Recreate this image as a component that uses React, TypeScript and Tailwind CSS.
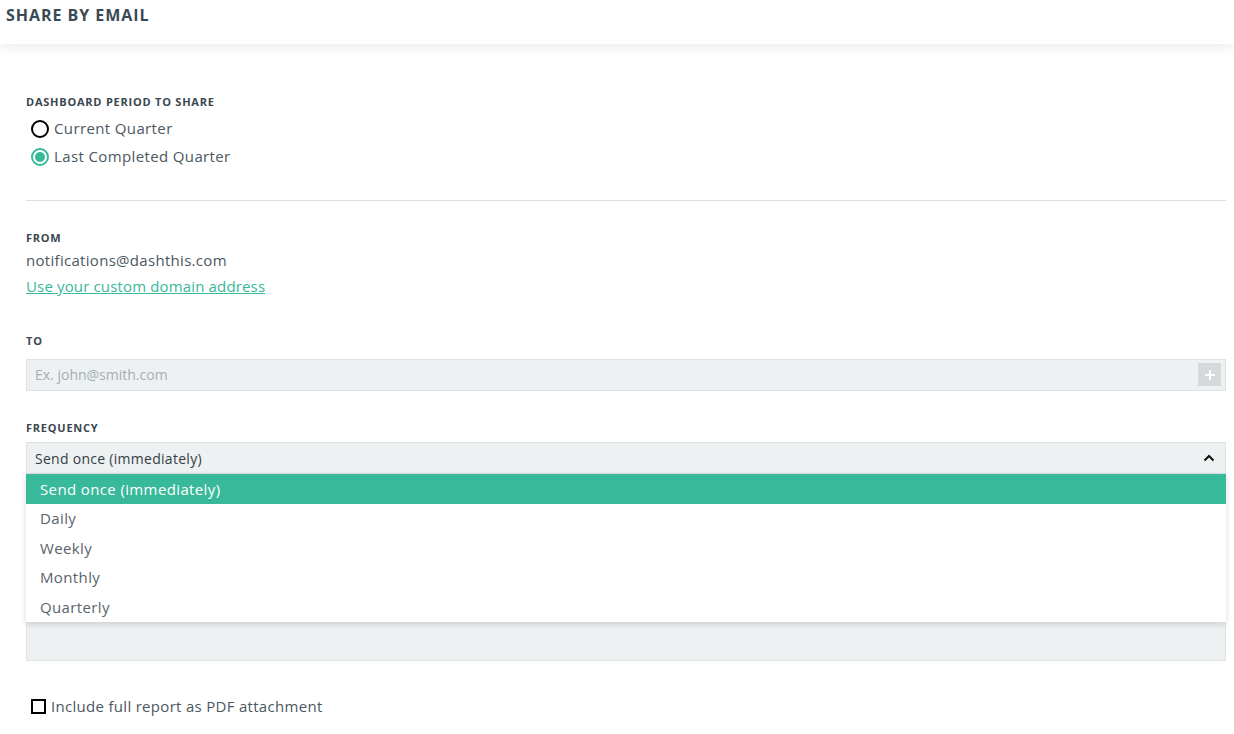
import React, { useState } from "react";

const options = ["Send once (immediately)", "Daily", "Weekly", "Monthly", "Quarterly"];

const Label: React.FC<{ children: React.ReactNode; className?: string }> = ({ children, className }) => (
  <div className={`text-[11px] font-bold tracking-[0.07em] text-[#3a4750] uppercase ${className || ""}`}>
    {children}
  </div>
);

const Radio: React.FC<{ checked: boolean; label: string }> = ({ checked, label }) => (
  <label className="flex items-center gap-[5px] h-[28px] pl-[5px] cursor-pointer">
    {checked ? (
      <span className="w-[18px] h-[18px] rounded-full border-2 border-[#38b99a] flex items-center justify-center">
        <span className="w-[10px] h-[10px] rounded-full bg-[#38b99a]" />
      </span>
    ) : (
      <span className="w-[18px] h-[18px] rounded-full border-2 border-black" />
    )}
    <span className="text-[15px] text-[#4b5761] tracking-[0.025em]">{label}</span>
  </label>
);

export default function App() {
  const [freq] = useState(0);

  return (
    <div className="min-h-screen bg-white font-['Open_Sans',sans-serif]">
      {/* header */}
      <div className="h-[44px] flex items-center px-[6px] shadow-[0_4px_10px_rgba(0,0,0,0.07)] relative z-10 bg-white">
        <h1 className="text-[16px] font-bold tracking-[0.06em] text-[#3a4a55] -mt-[15px]">SHARE BY EMAIL</h1>
      </div>

      <div className="px-[26px] pr-[8px] pt-[50px]">
        <Label>Dashboard period to share</Label>
        <div className="mt-[4px] flex flex-col">
          <Radio checked={false} label="Current Quarter" />
          <Radio checked label="Last Completed Quarter" />
        </div>

        <div className="mt-[29px] border-t border-[#dedede]" />

        <Label className="mt-[29px]">From</Label>
        <div className="mt-[3px] text-[15px] text-[#4b5761] tracking-[0.02em]">notifications@dashthis.com</div>
        <a href="#" className="block mt-[3px] text-[15px] text-[#38b99a] underline tracking-[0.01em]">
          Use your custom domain address
        </a>

        <Label className="mt-[36px]">To</Label>
        <div className="mt-[9px] h-[32px] bg-[#eef1f2] border border-[#dde2e5] flex items-center pl-[8px] pr-[4px]">
          <input
            className="flex-1 bg-transparent outline-none text-[14px] text-[#4b5761] placeholder:text-[#a5adb3]"
            placeholder="Ex. john@smith.com"
          />
          <button className="w-[23px] h-[23px] bg-[#d5d9dc] flex items-center justify-center">
            <svg width="12" height="12" viewBox="0 0 12 12">
              <path d="M6 1v10M1 6h10" stroke="white" strokeWidth="2" />
            </svg>
          </button>
        </div>

        <Label className="mt-[29px]">Frequency</Label>
        <div className="relative mt-[6px]">
          <div className="h-[32px] bg-[#eef1f2] border border-[#dde2e5] flex items-center justify-between pl-[8px] pr-[10px]">
            <span className="text-[14px] text-[#333d45] tracking-[0.02em]">{options[freq]}</span>
            <svg width="12" height="8" viewBox="0 0 12 8">
              <path d="M1.5 6.5L6 2l4.5 4.5" stroke="#111" strokeWidth="2" fill="none" />
            </svg>
          </div>
          <ul className="absolute left-0 right-0 top-[32px] z-20 bg-white shadow-[0_2px_6px_rgba(0,0,0,0.15)]">
            {options.map((o, i) => (
              <li
                key={o}
                className={`h-[29.6px] flex items-center pl-[14px] text-[15px] tracking-[0.025em] ${
                  i === freq ? "bg-[#38b99a] text-white" : "text-[#59636b]"
                }`}
              >
                {o}
              </li>
            ))}
          </ul>
        </div>

        {/* subject + message fields, mostly covered by the open dropdown */}
        <div className="mt-[52px] h-[32px] bg-[#eef1f2] border border-[#dde2e5]" />
        <div className="mt-[53px] h-[50px] bg-[#eef1f2] border border-[#dde2e5]" />

        <label className="mt-[34px] flex items-center gap-[5px] pl-[5px]">
          <span className="w-[15px] h-[15px] border-2 border-black" />
          <span className="text-[15px] text-[#4b5761] tracking-[0.02em]">Include full report as PDF attachment</span>
        </label>
      </div>
    </div>
  );
}
